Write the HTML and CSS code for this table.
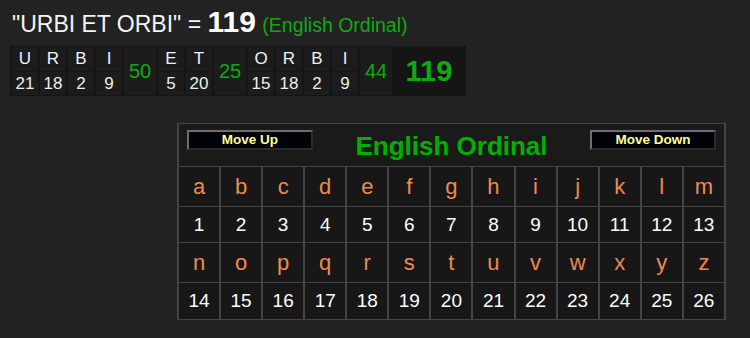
FILE: index.html
```html
<!DOCTYPE html>
<html>
<head>
<meta charset="utf-8">
<link rel="stylesheet" href="styles.css">
</head>
<body>
<div class="page">
  <div class="title">"URBI ET ORBI" = <span class="tval">119</span> <span class="tcipher">(English Ordinal)</span></div>
  <table class="bd">
    <tr class="r1">
      <td class="l">U</td><td class="l">R</td><td class="l">B</td><td class="l">I</td>
      <td class="sum" rowspan="2">50</td>
      <td class="l">E</td><td class="l">T</td>
      <td class="sum" rowspan="2">25</td>
      <td class="l">O</td><td class="l">R</td><td class="l">B</td><td class="l">I</td>
      <td class="sum" rowspan="2">44</td>
      <td class="total" rowspan="2">119</td>
    </tr>
    <tr class="r2">
      <td class="n">21</td><td class="n">18</td><td class="n">2</td><td class="n">9</td>
      <td class="n">5</td><td class="n">20</td>
      <td class="n">15</td><td class="n">18</td><td class="n">2</td><td class="n">9</td>
    </tr>
  </table>
  <table class="cipher">
    <tr class="hrow">
      <td colspan="13" class="head">
        <div class="headin">
          <button class="btn">Move Up</button>
          <div class="cname">English Ordinal</div>
          <button class="btn">Move Down</button>
        </div>
      </td>
    </tr>
    <tr class="let"><td>a</td><td>b</td><td>c</td><td>d</td><td>e</td><td>f</td><td>g</td><td>h</td><td>i</td><td>j</td><td>k</td><td>l</td><td>m</td></tr>
    <tr class="num n1"><td>1</td><td>2</td><td>3</td><td>4</td><td>5</td><td>6</td><td>7</td><td>8</td><td>9</td><td>10</td><td>11</td><td>12</td><td>13</td></tr>
    <tr class="let"><td>n</td><td>o</td><td>p</td><td>q</td><td>r</td><td>s</td><td>t</td><td>u</td><td>v</td><td>w</td><td>x</td><td>y</td><td>z</td></tr>
    <tr class="num n2"><td>14</td><td>15</td><td>16</td><td>17</td><td>18</td><td>19</td><td>20</td><td>21</td><td>22</td><td>23</td><td>24</td><td>25</td><td>26</td></tr>
  </table>
</div>
</body>
</html>
```

FILE: styles.css
```css
html, body {
  margin: 0;
  padding: 0;
  background: #222222;
  font-family: "Liberation Sans", Arial, sans-serif;
  color: #f2f2f2;
}

.page {
  padding: 0 0 0 10px;
}

.title {
  box-sizing: border-box;
  height: 46px;
  padding: 8px 0 0 2px;
  font-size: 23px;
  line-height: 28px;
  color: #f4f4f4;
  white-space: nowrap;
}

.tval {
  font-size: 30px;
  font-weight: bold;
  color: #ffffff;
}

.tcipher {
  font-size: 19.5px;
  color: #10aa10;
}

.bd {
  border-collapse: separate;
  border-spacing: 2px 1px;
  background: #151515;
  padding: 0;
}

.bd td {
  padding: 0;
  text-align: center;
  vertical-align: middle;
  background: #1c1c1c;
}

.bd .r1 td.l {
  height: 24px;
  width: 26px;
  font-size: 17px;
  color: #eef2ff;
}

.bd .r2 td.n {
  height: 23px;
  font-size: 17px;
  color: #eeeeee;
}

.bd td.sum {
  width: 32px;
  font-size: 20px;
  color: #10aa10;
}

.bd td.total {
  width: 70px;
  font-size: 29px;
  font-weight: bold;
  color: #10aa10;
  background: #151515;
}

.cipher {
  margin: 27px 0 0 167px;
  width: 549px;
  border-collapse: separate;
  border-spacing: 2px 1px;
  background: #444444;
}

.cipher td {
  padding: 0;
  text-align: center;
  vertical-align: middle;
  background: #171717;
}

.cipher td.head {
  background: #1a1a1a;
  height: 42px;
}

.headin {
  display: flex;
  justify-content: space-between;
  align-items: center;
  height: 42px;
  padding: 0 8px;
}

.btn {
  align-self: flex-start;
  margin: 6px 0 0 0;
  box-sizing: border-box;
  width: 126px;
  height: 20px;
  padding: 0;
  background: #02020a;
  border-style: solid;
  border-width: 2px;
  border-color: #6e6e6e #2b2b2b #2b2b2b #6e6e6e;
  color: #ffff99;
  font-family: "Liberation Sans", Arial, sans-serif;
  font-weight: bold;
  font-size: 13.5px;
  line-height: 16px;
}

.cname {
  font-size: 26px;
  font-weight: bold;
  color: #00b000;
  padding-top: 2px;
}

.cipher .let td {
  height: 39px;
  font-size: 22px;
  color: #ef8a50;
}

.cipher .num td {
  font-size: 19px;
  color: #ffffff;
}

.cipher .n1 td {
  height: 35px;
}

.cipher .n2 td {
  height: 36px;
}
```
